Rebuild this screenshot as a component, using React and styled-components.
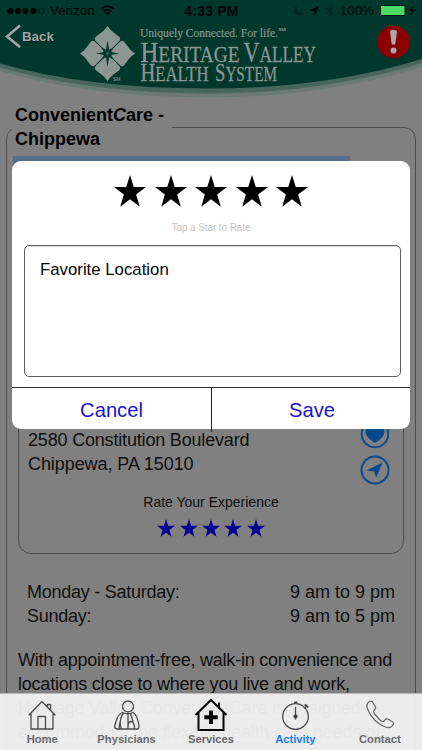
import React from "react";
import styled, { createGlobalStyle } from "styled-components";

const Global = createGlobalStyle`
  * { box-sizing: border-box; }
  html, body { margin: 0; padding: 0; }
  body { font-family: "Liberation Sans", Arial, sans-serif; background: #808080; overflow: hidden; }
`;

const Screen = styled.div`
  position: relative;
  width: 422px;
  height: 750px;
  overflow: hidden;
  background: #808080;
  color: #0f0f0f;
`;

/* ---------- header ---------- */
const Header = styled.header`
  position: relative;
  height: 103px;
`;
const Backdrop = styled.svg`
  position: absolute;
  inset: 0;
  width: 422px;
  height: 103px;
`;
const StatusBar = styled.div`
  position: relative;
  display: grid;
  grid-template-columns: 1fr auto 1fr;
  align-items: center;
  height: 20px;
  padding: 1px 6px 0 7px;
  font-size: 13.4px;
  color: #020605;
`;
const StatusGroup = styled.div`
  display: flex;
  align-items: center;
  justify-content: ${(p) => (p.$end ? "flex-end" : "flex-start")};
  gap: ${(p) => p.$gap}px;
`;
const Clock = styled.span`
  font-weight: bold;
  font-size: 14px;
  letter-spacing: 0.2px;
`;
const HeaderRow = styled.div`
  position: relative;
  display: flex;
  align-items: flex-start;
  height: 70px;
`;
const BackButton = styled.button`
  display: flex;
  align-items: center;
  gap: 1px;
  width: 80px;
  height: 32px;
  padding: 0 0 0 5px;
  border: 0;
  background: none;
  color: #a3a8a6;
  font: bold 13.3px "Liberation Sans", Arial, sans-serif;
  text-shadow: 0 1px 1px #001710;
`;
const Brand = styled.svg`
  width: 240px;
  height: 64px;
  overflow: visible;
`;
const AlertBadge = styled.svg`
  width: 34px;
  height: 34px;
  margin: 5px 0 0 56px;
`;

/* ---------- page body ---------- */
const Location = styled.fieldset`
  display: flex;
  flex-direction: column;
  margin: 0 6px;
  padding: 0;
  width: 410px;
  height: 700px;
  min-width: 0;
  border: 1px solid #4d4d4d;
  border-radius: 12px;
`;
const Title = styled.legend`
  width: 160px;
  margin-left: 5px;
  padding: 0 0 0 3px;
  font-size: 18px;
  font-weight: bold;
  line-height: 24px;
  color: #000;
`;
const PhotoStrip = styled.div`
  flex: none;
  width: 337px;
  height: 100px;
  margin: 5px 0 0 6px;
  background: #566d8a;
`;
const AddressCard = styled.section`
  display: flex;
  flex: none;
  flex-direction: column;
  width: 386px;
  height: 258px;
  margin: 40px 0 0 11px;
  padding: 131px 13px 0 9px;
  border: 1px solid #4d4d4d;
  border-radius: 13px;
`;
const AddressRow = styled.div`
  display: flex;
  justify-content: space-between;
  height: 48px;
`;
const Copy = styled.p`
  margin: ${(p) => p.$margin || "0"};
  font-size: 18px;
  line-height: 24px;
  letter-spacing: ${(p) => p.$track ?? -0.22}px;
  white-space: nowrap;
`;
const ActionStack = styled.div`
  display: flex;
  flex-direction: column;
  gap: 6px;
  margin-top: -9px;
  svg { flex: none; }
`;
const RateLabel = styled.div`
  margin: 17px 0 0 4px;
  text-align: center;
  font-size: 14px;
  line-height: 18px;
`;
const StarRow = styled.div`
  display: flex;
  justify-content: center;
  gap: ${(p) => p.$gap}px;
  margin-top: ${(p) => p.$top}px;
  padding-left: ${(p) => p.$inset || 0}px;
  color: ${(p) => p.$color};
  svg { display: block; flex: none; width: ${(p) => p.$size}px; height: ${(p) => p.$size}px; }
`;
const Hours = styled.div`
  display: flex;
  justify-content: space-between;
  margin: 26px 20px 0 20px;
`;

/* ---------- tab bar ---------- */
const TabBar = styled.nav`
  position: absolute;
  left: 0;
  right: 0;
  bottom: 0;
  display: grid;
  grid-template-columns: repeat(5, 1fr);
  height: 57px;
  border-top: 1px solid #b9b9b9;
  background: rgba(240, 240, 240, 0.955);
`;
const Tab = styled.div`
  display: flex;
  flex-direction: column;
  align-items: center;
  padding-top: 4px;
  color: ${(p) => (p.$active ? "#1a7cf0" : "#68686b")};
  font-size: 11.2px;
  line-height: 14px;
  font-weight: bold;
  svg { display: block; width: 34px; height: 34px; }
`;

/* ---------- rating dialog ---------- */
const Dialog = styled.div`
  position: absolute;
  left: 12px;
  top: 161px;
  display: flex;
  flex-direction: column;
  width: 398px;
  height: 268px;
  border-radius: 9px;
  background: #fff;
`;
const Hint = styled.div`
  flex: none;
  margin-top: 14px;
  text-align: center;
  font-size: 10px;
  line-height: 14px;
  letter-spacing: -0.1px;
  color: #c6c6c6;
`;
const Comment = styled.div`
  flex: none;
  height: 132px;
  margin: 10px 9px 0 12px;
  padding: 14px 15px;
  border: 1px solid #606060;
  border-radius: 5px;
  box-shadow: inset 0 1px 1px #ddd;
  font-size: 16.8px;
  line-height: 20px;
  color: #050505;
`;
const DialogActions = styled.div`
  display: grid;
  flex: none;
  grid-template-columns: 200px 198px;
  height: 45px;
  margin-top: 10.5px;
  border-top: 1px solid #333;
`;
const DialogButton = styled.button`
  height: 44px;
  padding: ${(p) => (p.$divided ? "0" : "0 0 0 2px")};
  border: 0;
  border-right: ${(p) => (p.$divided ? "1px solid #222" : "0")};
  background: none;
  color: #1a12d0;
  font: 20.2px "Liberation Sans", Arial, sans-serif;
`;

const Star = () => (
  <svg viewBox="0 0 100 100">
    <path fill="currentColor" d="M50 0 61.8 37.5 100 37.8 69.2 61 80.5 99 50 76 19.5 99 30.8 61 0 37.8 38.2 37.5Z" />
  </svg>
);

const Stars = (props) => (
  <StarRow {...props}>
    {[1, 2, 3, 4, 5].map((n) => <Star key={n} />)}
  </StarRow>
);

const line = { fill: "none", stroke: "#4b4b4d", strokeWidth: 1.3, strokeLinejoin: "round", strokeLinecap: "round" };

const HomeIcon = () => (
  <svg viewBox="0 0 34 34" {...line}>
    <path d="M4 17 17 3.500 30 17 M6 15.500V31H28V15.500 M22.500 8.500V6.500H25.500V12 M13 30.500V18.500H20.500V30.500" />
  </svg>
);
const PhysicianIcon = () => (
  <svg viewBox="0 0 34 34" {...line}>
    <circle cx="18" cy="8.500" r="5.500" />
    <path d="M12.500 14.500Q8 16 6 23.500L4.500 29Q5 31 8 31H28Q29.500 30 28.500 25Q27 17 23 14.500 M12.500 14.500Q17.500 17 23 14.500 M13.500 15Q10 20 9 30.500 M12 17Q9 24 11 30 M18 16V31 M20.500 15.500 23 23.500 M18 28Q18.500 23.500 21 23.500Q24.500 24 24.500 30.500" />
  </svg>
);
const ServicesIcon = () => (
  <svg viewBox="0 0 34 34" fill="none" stroke="#050505" strokeWidth="2">
    <path d="M1.500 17 17 2 32.500 17 M4.500 14.500V32H29.500V14.500 M25 9.500V4.500" />
    <path strokeWidth="4" d="M17 12.500V26 M10.300 19.200H23.700" />
  </svg>
);
const ActivityIcon = () => (
  <svg viewBox="0 0 34 34" {...line}>
    <circle cx="17.500" cy="18.500" r="12.800" />
    <path strokeWidth="2.200" d="M17 4.500H18.500 M27.500 7 29.500 8.800" />
    <path d="M17.500 9.500V21 M27.500 9 26.500 10" />
    <circle cx="17.500" cy="18.500" r="1.500" fill="#222" />
  </svg>
);
const ContactIcon = () => (
  <svg viewBox="0 0 34 34" {...line} stroke="#6b6b6d">
    <path d="M6.500 3.500C4 5 3 8 5 12C8.500 20 14.500 26 22.500 29C26 30.500 29 29 30.500 26C31 24.500 30 24 27 22.200L24.500 21Q23 20.500 22 22L20.500 23.500Q19 24 16.500 21.500L11.500 16Q10 14 11 12.500L12.500 10.500Q13 9.500 12 8L9.500 4Q8.500 2.500 6.500 3.500Z" />
  </svg>
);

const tabs = [
  ["Home", HomeIcon],
  ["Physicians", PhysicianIcon],
  ["Services", ServicesIcon],
  ["Activity", ActivityIcon],
  ["Contact", ContactIcon],
];

const Petal = ({ turn }) => (
  <path transform={`rotate(${turn} 27.5 27.5)`} d="M27.500 0C30.500 5 35 7.500 39.500 11Q41 12.500 39.600 14.700L27.500 26.800 15.400 14.700Q14 12.500 15.500 11C20 7.500 24.500 5 27.500 0Z" />
);

export default function App() {
  return (
    <Screen>
      <Global />
      <Header>
        <Backdrop viewBox="0 0 422 103">
          <path fill="#6c7a75" d="M0 0H422V67Q325 97 211 97.500Q90 97.500 0 71Z" />
          <path fill="#47665c" d="M0 0H422V63Q325 93 211 93.500Q90 93.500 0 67.500Z" />
          <path fill="#00382b" d="M0 0H422V59Q325 88.500 211 88.500Q90 89 0 63.500Z" />
        </Backdrop>
        <StatusBar>
          <StatusGroup $gap={5}>
            <svg width="38" height="8" viewBox="0 0 38 8">
              <g fill="#020605">
                <circle cx="3.500" cy="4" r="3.100" /><circle cx="11" cy="4" r="3.100" />
                <circle cx="18.500" cy="4" r="3.100" /><circle cx="26.500" cy="4" r="3.100" />
              </g>
              <circle cx="34.500" cy="4" r="2.700" fill="none" stroke="#020605" strokeWidth=".7" />
            </svg>
            <span>Verizon</span>
            <svg width="15" height="11" viewBox="0 0 15 11" fill="none" stroke="#020605" strokeWidth="2">
              <path d="M1 4Q7.500-1.500 14 4 M3.500 6.500Q7.500 3 11.500 6.500" />
              <path fill="#020605" stroke="none" d="M4.900 8Q7.500 6 10.100 8L7.500 10.800Z" />
            </svg>
          </StatusGroup>
          <Clock>4:33 PM</Clock>
          <StatusGroup $end $gap={6}>
            <svg width="10" height="10" viewBox="0 0 10 10"><path fill="#002a20" d="M4 0A5 5 0 1 0 10 7Q3 7 4 0Z" /></svg>
            <svg width="10" height="10" viewBox="0 0 10 10"><path fill="#020605" d="M10 0 5.800 10 5 5 0 4.300Z" /></svg>
            <svg width="9" height="13" viewBox="0 0 9 13"><path fill="none" stroke="#002a20" strokeWidth="1.200" d="M1 3.500 7.500 9.300 4.500 12V1L7.500 3.700 1 9.500" /></svg>
            <span>100%</span>
            <svg width="36" height="11" viewBox="0 0 36 11">
              <rect x=".500" y=".500" width="24.500" height="10" rx="1" fill="#4cd964" stroke="#04140e" />
              <path fill="#020605" d="M26 3.500Q28 5.500 26 7.500Z M33.500 0.500 29.500 6H32.300L31 10.500 35.500 4.700H32.500Z" />
            </svg>
          </StatusGroup>
        </StatusBar>
        <HeaderRow>
          <BackButton>
            <svg width="16" height="24" viewBox="0 0 16 24"><path d="M15 1.500 2 12.500 15 23" fill="none" stroke="#a3a8a6" strokeWidth="2.700" /></svg>
            Back
          </BackButton>
          <Brand viewBox="80 20 240 64" fill="#8c9692" fontFamily="Liberation Serif, serif">
            <g transform="translate(80 26)">
              <Petal turn={0} /><Petal turn={90} /><Petal turn={180} /><Petal turn={270} />
              <path fill="#00382b" d="M27.500 14 29 23.800 33.500 21.500 31.200 26 39 27.500 31.200 29 33.500 33.500 29 31.200 27.500 41 26 31.200 21.500 33.500 23.800 29 16 27.500 23.800 26 21.500 21.500 26 23.800Z" />
              <circle cx="27.500" cy="27.500" r="1.500" fill="#47665c" />
            </g>
            <text x="113" y="81" fontSize="5" fontFamily="Liberation Sans, sans-serif">SM</text>
            <text x="140" y="36.500" fontSize="12.500" textLength="138" lengthAdjust="spacingAndGlyphs" stroke="#8c9692" strokeWidth=".2">Uniquely Connected. For life.</text>
            <text x="278.500" y="31" fontSize="5" stroke="#8c9692" strokeWidth=".2">SM</text>
            <g stroke="#8c9692" strokeWidth=".3">
              <text x="140.500" y="62.300" fontSize="30" textLength="99" lengthAdjust="spacingAndGlyphs">H<tspan fontSize="23.500">ERITAGE</tspan></text>
              <text x="243.500" y="62.300" fontSize="30" textLength="72.500" lengthAdjust="spacingAndGlyphs">V<tspan fontSize="23.500">ALLEY</tspan></text>
              <text x="140.500" y="81" fontSize="24.500" textLength="68" lengthAdjust="spacingAndGlyphs">H<tspan fontSize="20">EALTH</tspan></text>
              <text x="215" y="81" fontSize="24.500" textLength="62" lengthAdjust="spacingAndGlyphs">S<tspan fontSize="20">YSTEM</tspan></text>
            </g>
          </Brand>
          <AlertBadge viewBox="0 0 34 34">
            <circle cx="17.500" cy="17" r="16.300" fill="#8b0000" />
            <path fill="#aaa" d="M14 6.500Q14 5 17.500 5Q21 5 21 6.500L19.200 19.500H15.800Z" />
            <circle cx="17.500" cy="25.500" r="3" fill="#aaa" />
          </AlertBadge>
        </HeaderRow>
      </Header>

      <Location>
        <Title>Convenient<i>C</i>are -<br />Chippewa</Title>
        <PhotoStrip />
        <AddressCard>
          <AddressRow>
            <div>
              <Copy $track={-0.18}>2580 Constitution Boulevard</Copy>
              <Copy $track={-0.07}>Chippewa, PA 15010</Copy>
            </div>
            <ActionStack>
              <svg width="30" height="30" viewBox="0 0 30 30">
                <circle cx="15" cy="15" r="13.300" fill="none" stroke="#0a4b8d" strokeWidth="2" />
                <path fill="#07488c" d="M15 24C9 20 5.500 17 5.500 12.500C5.500 7 13 6 15 10.500C17 6 24.500 7 24.500 12.500C24.500 17 21 20 15 24Z" />
              </svg>
              <svg width="30" height="30" viewBox="0 0 30 30">
                <circle cx="15" cy="15" r="13.500" fill="none" stroke="#0a4b8d" strokeWidth="2" />
                <path fill="#07488c" d="M22.500 7.500 16 23 14.300 16.500 6.500 15.500Z" />
              </svg>
            </ActionStack>
          </AddressRow>
          <RateLabel>Rate Your Experience</RateLabel>
          <Stars $size={18} $gap={4.4} $top={8} $inset={4} $color="#000093" />
        </AddressCard>
        <Hours>
          <Copy $track={-0.25}>Monday - Saturday:<br />Sunday:</Copy>
          <Copy $track={0}>9 am to 9 pm<br />9 am to 5 pm</Copy>
        </Hours>
        <Copy $margin="20px 0 0 11px">
          With appointment-free, walk-in convenience and<br />
          locations close to where you live and work,<br />
          Heritage Valley ConvenientCare is designed to<br />
          accommodate the flexible health care needs of
        </Copy>
      </Location>

      <Dialog>
        <Stars $size={32} $gap={8.5} $top={13.5} $color="#000" />
        <Hint>Tap a Star to Rate</Hint>
        <Comment>Favorite Location</Comment>
        <DialogActions>
          <DialogButton $divided>Cancel</DialogButton>
          <DialogButton>Save</DialogButton>
        </DialogActions>
      </Dialog>

      <TabBar>
        {tabs.map(([name, Icon]) => (
          <Tab key={name} $active={name === "Activity"}>
            <Icon />
            {name}
          </Tab>
        ))}
      </TabBar>
    </Screen>
  );
}
